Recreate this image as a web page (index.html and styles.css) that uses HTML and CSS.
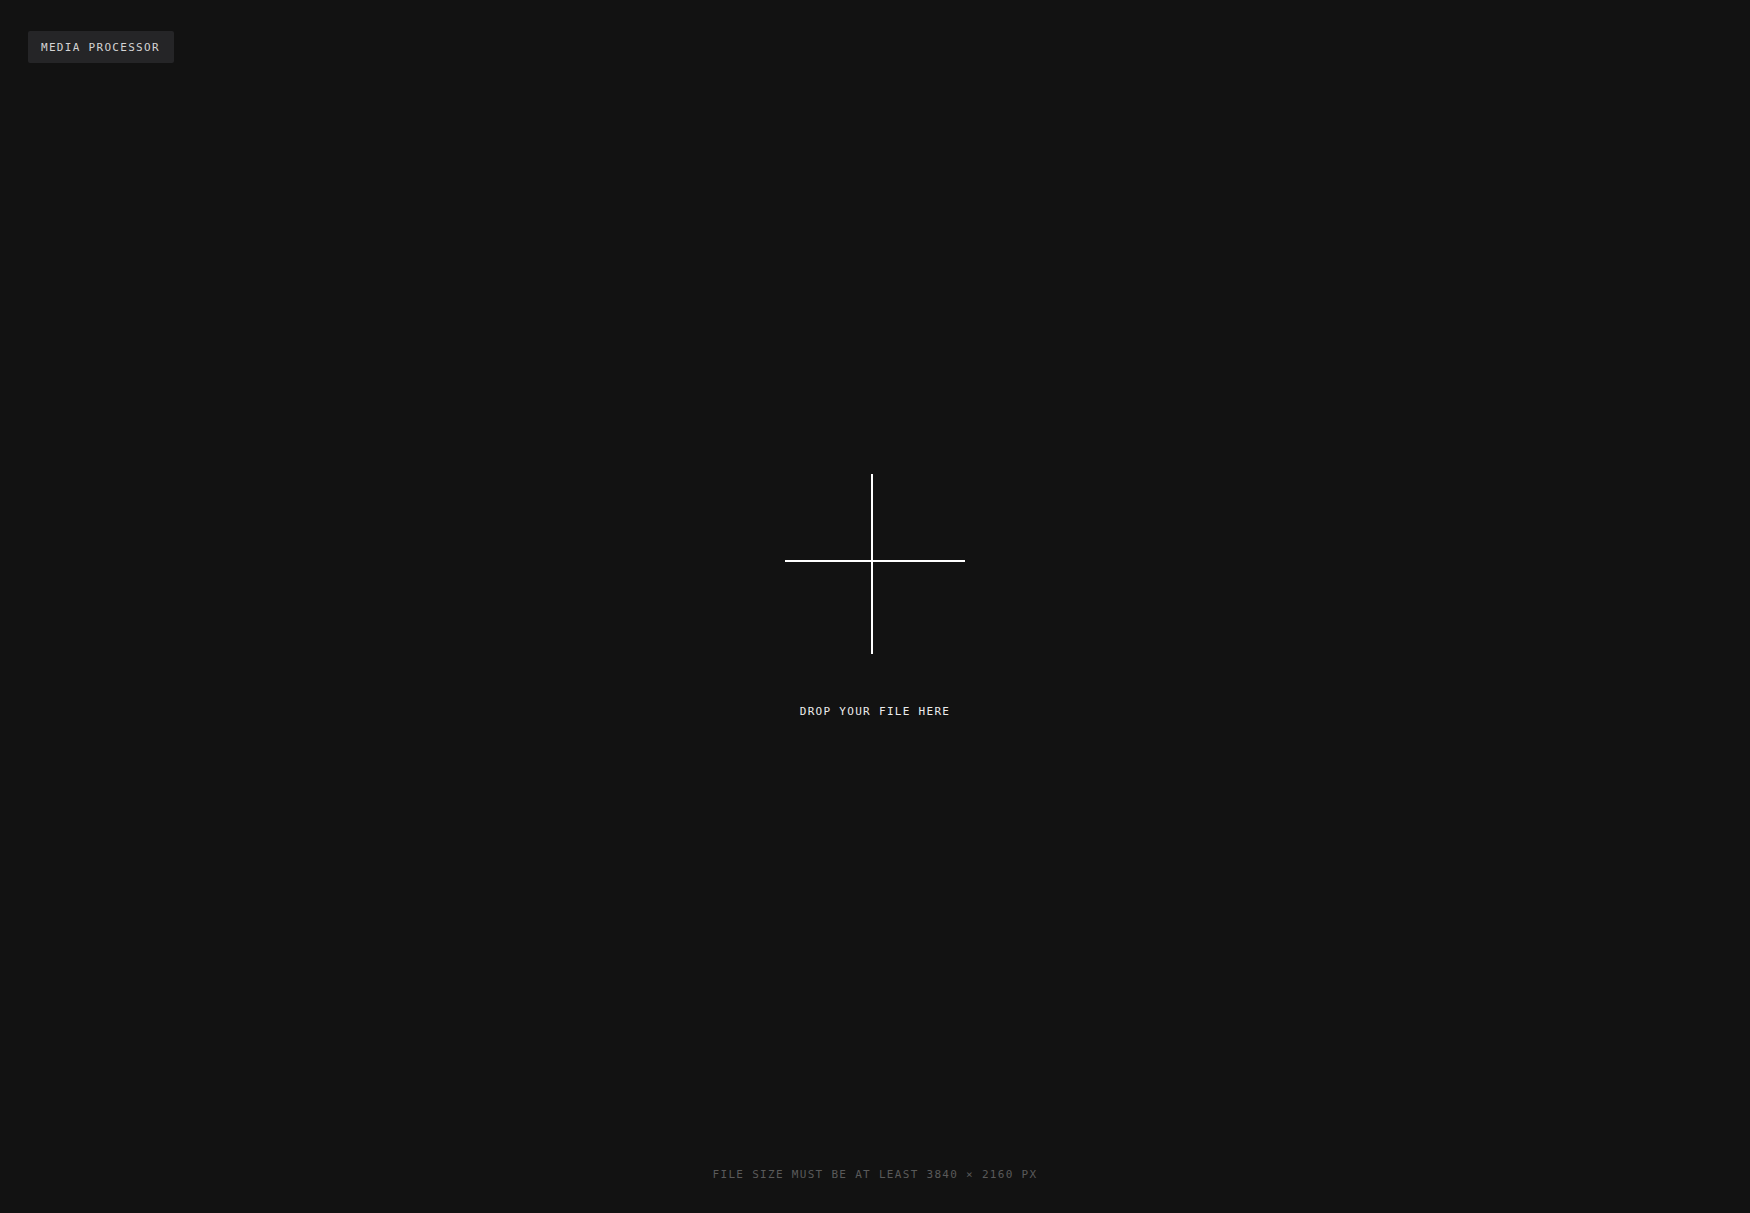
FILE: index.html
```html
<!DOCTYPE html>
<html lang="en">
<head>
<meta charset="utf-8">
<title>Media Processor</title>
<link rel="stylesheet" href="styles.css">
</head>
<body>
<div class="page">
  <header class="header">
    <div class="badge">MEDIA PROCESSOR</div>
  </header>
  <main class="drop">
    <div class="cross">
      <span class="cross-v"></span>
      <span class="cross-h"></span>
    </div>
    <div class="drop-label">DROP YOUR FILE HERE</div>
  </main>
  <footer class="footer">FILE SIZE MUST BE AT LEAST 3840 × 2160 PX</footer>
</div>
</body>
</html>
```
FILE: styles.css
```css
* { box-sizing: border-box; }
html, body {
  margin: 0;
  padding: 0;
  background: #121212;
}
body {
  font-family: "DejaVu Sans Mono", "Liberation Mono", monospace;
  font-size: 11px;
  letter-spacing: 1.3px;
}
.page {
  min-height: 100vh;
  display: flex;
  flex-direction: column;
}
.header {
  padding: 31px 0 0 28px;
  display: flex;
}
.badge {
  height: 32px;
  width: 146px;
  padding: 0 0 0 13px;
  display: flex;
  align-items: center;
  background: #252527;
  border-radius: 2px;
  color: #d4d4d4;
  line-height: 1;
}
.drop {
  display: flex;
  flex-direction: column;
  align-items: center;
  padding-top: 411px;
}
.cross {
  position: relative;
  width: 180px;
  height: 180px;
}
.cross-v {
  position: absolute;
  left: 86px;
  top: 0;
  width: 2px;
  height: 180px;
  background: #ffffff;
}
.cross-h {
  position: absolute;
  left: 0;
  top: 86px;
  width: 180px;
  height: 2px;
  background: #ffffff;
}
.drop-label {
  margin-top: 50px;
  line-height: 16px;
  color: #ececec;
}
.footer {
  margin-top: auto;
  text-align: center;
  line-height: 16px;
  padding-bottom: 30px;
  color: #5a5a5a;
}
```
